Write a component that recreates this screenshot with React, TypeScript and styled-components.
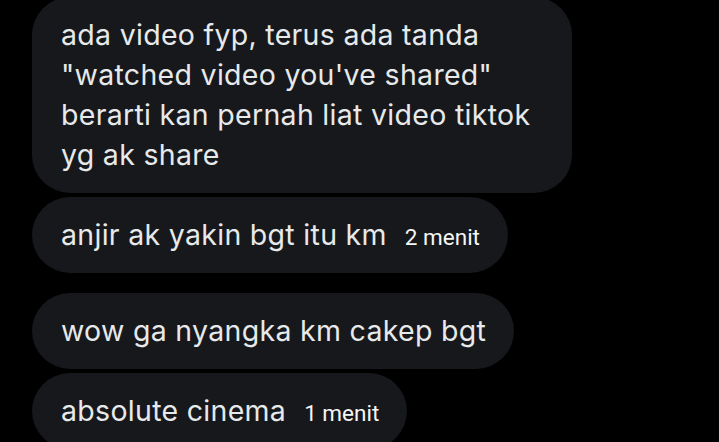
import React from "react";
import styled, { createGlobalStyle } from "styled-components";

const Global = createGlobalStyle`
  html, body { margin: 0; padding: 0; background: #000; }
  body { overflow: hidden; width: 719px; height: 442px; }
`;

const Thread = styled.div`
  display: flex;
  flex-direction: column;
  align-items: flex-start;
  padding-left: 32px;
  margin-top: -3px;
`;

const Bubble = styled.div<{ $gap?: number; $wide?: boolean }>`
  box-sizing: border-box;
  margin-top: ${(p) => p.$gap ?? 0}px;
  ${(p) => (p.$wide ? "width: 540px;" : "")}
  height: ${(p) => (p.$wide ? "auto" : "76px")};
  background: #16181c;
  border-radius: 38px;
  padding: 18px 28px 18px 29px;
  color: #e7e9ea;
  font-family: Inter, "Noto Sans", sans-serif;
  font-size: 28.5px;
  letter-spacing: 0.3px;
  line-height: 40px;
  white-space: nowrap;
`;

const Time = styled.span`
  margin-left: 18px;
  font-family: Roboto, "Noto Sans", sans-serif;
  font-size: 22.5px;
  letter-spacing: 0;
  line-height: 1;
  color: #f5f6f6;
`;

export default function App() {
  return (
    <>
      <Global />
      <Thread>
        <Bubble $wide>
          ada video fyp, terus ada tanda
          <br />
          "watched video you've shared"
          <br />
          berarti kan pernah liat video tiktok
          <br />
          yg ak share
        </Bubble>
        <Bubble $gap={4}>
          anjir ak yakin bgt itu km<Time>2 menit</Time>
        </Bubble>
        <Bubble $gap={20}>wow ga nyangka km cakep bgt</Bubble>
        <Bubble $gap={4}>
          absolute cinema<Time>1 menit</Time>
        </Bubble>
      </Thread>
    </>
  );
}
